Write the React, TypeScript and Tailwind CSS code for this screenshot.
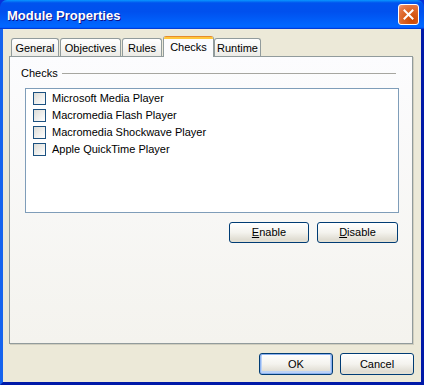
import React from "react";

const font = { fontFamily: '"Liberation Sans", Arial, sans-serif' };

function Tab({ label, w, ml, selected }: { label: string; w: string; ml: string; selected?: boolean }) {
  if (selected) {
    return (
      <div
        className={`${w} ${ml} relative z-10 -mb-px flex h-[21px] flex-col overflow-hidden rounded-t-[3px] border-x border-[#919B9C] bg-[#FCFCFE]`}
      >
        <div className="h-[1px] bg-[#E68B2C]" />
        <div className="h-[2px] bg-[#FFC73C]" />
        <div className="flex flex-1 items-center justify-center pb-[2px] text-[11px] text-black">{label}</div>
      </div>
    );
  }
  return (
    <div
      className={`${w} ${ml} flex h-[18px] items-center justify-center rounded-t-[3px] border border-b-0 border-[#919B9C] bg-gradient-to-b from-white to-[#ECEBE6] pt-[1px] text-[11px] text-black`}
    >
      {label}
    </div>
  );
}

function Check({ label }: { label: string }) {
  return (
    <div className="flex h-[17px] items-center gap-[6px]">
      <div className="h-[13px] w-[13px] border border-[#1C5180] bg-gradient-to-br from-[#DCDCD7] to-white" />
      <span className="text-[11px] text-black">{label}</span>
    </div>
  );
}

function XPButton({ children, w, h, def }: { children: React.ReactNode; w: string; h: string; def?: boolean }) {
  return (
    <div
      className={`${w} ${h} flex items-center justify-center rounded-[3px] border border-[#003C74] bg-gradient-to-b from-white via-[#F4F3EE] to-[#D9D5C9] text-[11px] text-black ${
        def ? "shadow-[inset_0_0_0_1px_#8DB2F0,inset_0_-1px_0_2px_#BCD3F6]" : "shadow-[inset_0_-2px_0_0_#E3E0D4]"
      }`}
    >
      {children}
    </div>
  );
}

export default function App() {
  return (
    <div
      className="flex h-[385px] w-[424px] flex-col bg-[#0831D9]"
      style={font}
    >
      {/* Title bar */}
      <div className="flex h-[29px] shrink-0 items-center justify-between rounded-t-[7px] bg-[linear-gradient(180deg,#0997FF_0%,#0053EE_10%,#0050EE_40%,#0066FF_88%,#0066FF_93%,#005BFF_95%,#003DD7_97%,#003DD7_100%)] pl-[7px] pr-[5px]">
        <span className="pt-[2px] text-[13px] font-bold text-white [text-shadow:1px_1px_#0F1089]">Module Properties</span>
        <div className="flex h-[21px] w-[21px] items-center justify-center rounded-[3px] border border-white bg-[radial-gradient(circle_at_70%_80%,#CC4600_0%,#DC6527_50%,#E67B4C_80%,#F2A488_100%)]">
          <svg width="11" height="11" viewBox="0 0 11 11">
            <path d="M1.5 1.5 L9.5 9.5 M9.5 1.5 L1.5 9.5" stroke="white" strokeWidth="2" strokeLinecap="square" />
          </svg>
        </div>
      </div>

      {/* Client area */}
      <div className="flex flex-1 flex-col border-l-[3px] border-r-[3px] border-b-[3px] border-l-[#1664EE] border-r-[#0019A8] border-b-[#0019A8] bg-[#ECE9D8] pl-[6px] pr-[7px] pt-[7px]">
        {/* Tabs */}
        <div className="flex items-end pl-[2px]">
          <Tab label="General" w="w-[48px]" ml="ml-0" />
          <Tab label="Objectives" w="w-[61px]" ml="ml-[1px]" />
          <Tab label="Rules" w="w-[40px]" ml="ml-[1px]" />
          <Tab label="Checks" w="w-[51px]" ml="ml-[1px]" selected />
          <Tab label="Runtime" w="w-[47px]" ml="ml-0" />
        </div>

        {/* Panel */}
        <div className="mr-[1px] flex h-[288px] flex-col border border-[#919B9C] bg-gradient-to-b from-[#FCFCFE] to-[#F4F3EE] pl-[11px] pr-[13px] pt-[10px] shadow-[1px_1px_0_#D0CEBF]">
          <div className="flex h-[13px] items-center gap-[4px]">
            <span className="text-[11px] text-black">Checks</span>
            <div className="mr-[3px] h-px flex-1 bg-[#A6A6A0]" />
          </div>
          <div className="ml-[4px] mt-[8px] flex h-[125px] flex-col border border-[#7F9DB9] bg-white pl-[7px] pt-[1px]">
            <Check label="Microsoft Media Player" />
            <Check label="Macromedia Flash Player" />
            <Check label="Macromedia Shockwave Player" />
            <Check label="Apple QuickTime Player" />
          </div>
          <div className="mt-[9px] flex justify-end gap-[8px] pr-[1px]">
            <XPButton w="w-[80px]" h="h-[21px]">
              <span><span className="underline">E</span>nable</span>
            </XPButton>
            <XPButton w="w-[81px]" h="h-[21px]">
              <span><span className="underline">D</span>isable</span>
            </XPButton>
          </div>
        </div>

        {/* Bottom buttons */}
        <div className="mt-[9px] flex justify-end gap-[7px]">
          <XPButton w="w-[74px]" h="h-[22px]" def>OK</XPButton>
          <XPButton w="w-[74px]" h="h-[22px]">Cancel</XPButton>
        </div>
      </div>
    </div>
  );
}
